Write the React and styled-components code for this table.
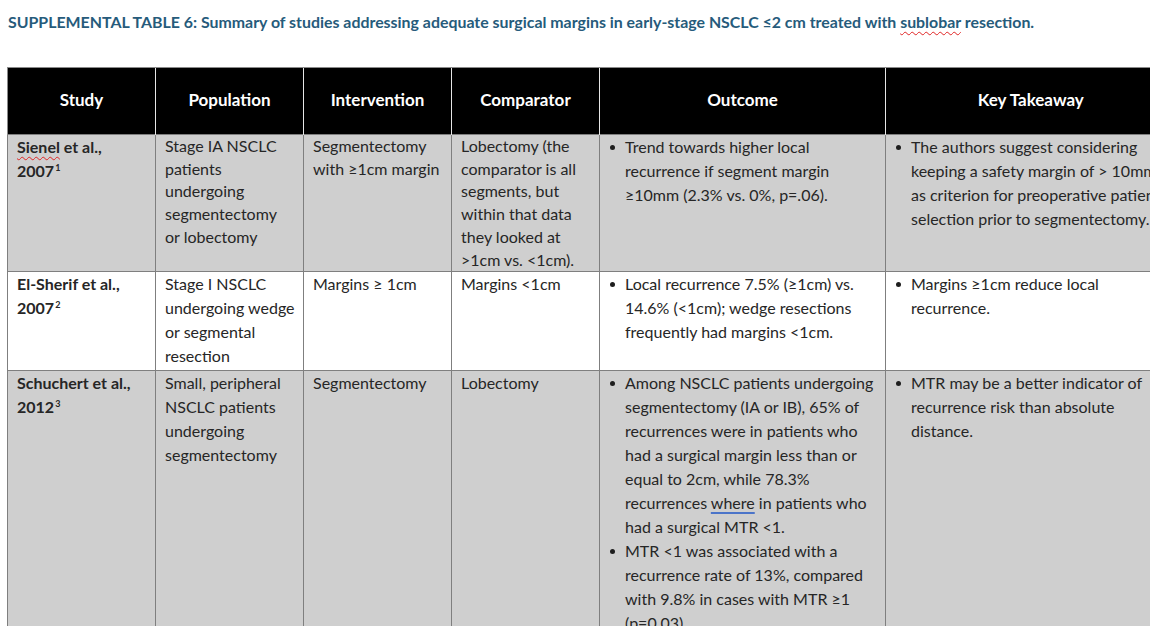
import styled, { createGlobalStyle } from "styled-components";

const GlobalStyle = createGlobalStyle`
  html, body {
    margin: 0;
    padding: 0;
    background: #fff;
    overflow: hidden;
  }
  body {
    font-family: Lato, "Open Sans", sans-serif;
    color: #262626;
  }
`;

const Page = styled.div`
  padding: 12px 0 0 7px;
  width: 1200px;
`;

const Title = styled.h1`
  margin: 0 0 35px 1px;
  font-size: 15.9px;
  font-weight: 700;
  line-height: 20px;
  color: #265b7b;
  white-space: nowrap;
`;

const Squiggle = styled.span`
  text-decoration: underline wavy #e02424;
  text-decoration-thickness: 1px;
  text-underline-offset: 3px;
`;

const Grammar = styled.span`
  text-decoration: underline solid #4b74c9;
  text-decoration-thickness: 2px;
  text-underline-offset: 3px;
`;

const Sup = styled.sup`
  font-size: 9px;
  line-height: 0;
  vertical-align: 6px;
  margin-left: 1px;
`;

const Table = styled.table`
  border-collapse: collapse;
  table-layout: fixed;
  width: 1168px;
`;

const HeadCell = styled.th`
  background: #000;
  color: #fff;
  font-weight: 700;
  font-size: 17px;
  height: 62px;
  padding: 0 0 4px;
  text-align: center;
  vertical-align: middle;
  border-top: 1px solid #8a8a8a;
  border-left: 1px solid #e6e6e6;

  &:first-child {
    border-left-color: #8a8a8a;
  }
`;

const Row = styled.tr`
  background: ${(p) => (p.$shaded ? "#cfcfcf" : "#fff")};
  height: ${(p) => p.$h}px;
`;

const Cell = styled.td`
  border: 1px solid #7f7f7f;
  vertical-align: top;
  padding: 0 6px 0 9px;
  font-size: 16px;
  font-weight: ${(p) => (p.$bold ? 700 : 400)};
  line-height: ${(p) => p.$lh}px;
`;

const Line = styled.span`
  display: block;
  white-space: nowrap;
`;

const BulletItem = styled.div`
  display: flex;
  line-height: 24px;
`;

const Dot = styled.span`
  flex: none;
  width: 16px;
  height: 24px;
  display: flex;
  align-items: center;

  &::before {
    content: "";
    width: 5px;
    height: 5px;
    margin-left: 1px;
    border-radius: 50%;
    background: #1e1e1e;
  }
`;

const columns = [
  { label: "Study", width: 148 },
  { label: "Population", width: 148 },
  { label: "Intervention", width: 148 },
  { label: "Comparator", width: 148 },
  { label: "Outcome", width: 286 },
  { label: "Key Takeaway", width: 290 },
];

const rows = [
  {
    shaded: true,
    h: 137,
    lh: 22.7,
    study: [<><Squiggle>Sienel</Squiggle> et al.,</>, <>2007<Sup>1</Sup></>],
    population: ["Stage IA NSCLC", "patients", "undergoing", "segmentectomy", "or lobectomy"],
    intervention: ["Segmentectomy", "with ≥1cm margin"],
    comparator: [
      "Lobectomy (the",
      "comparator is all",
      "segments, but",
      "within that data",
      "they looked at",
      ">1cm vs. <1cm).",
    ],
    outcome: [["Trend towards higher local", "recurrence if segment margin", "≥10mm (2.3% vs. 0%, p=.06)."]],
    takeaway: [
      [
        "The authors suggest considering",
        "keeping a safety margin of > 10mm",
        "as criterion for preoperative patient",
        "selection prior to segmentectomy.",
      ],
    ],
  },
  {
    shaded: false,
    h: 99,
    lh: 24,
    study: ["El-Sherif et al.,", <>2007<Sup>2</Sup></>],
    population: ["Stage I NSCLC", "undergoing wedge", "or segmental", "resection"],
    intervention: ["Margins ≥ 1cm"],
    comparator: ["Margins <1cm"],
    outcome: [["Local recurrence 7.5% (≥1cm) vs.", "14.6% (<1cm); wedge resections", "frequently had margins <1cm."]],
    takeaway: [["Margins ≥1cm reduce local", "recurrence."]],
  },
  {
    shaded: true,
    h: 300,
    lh: 24,
    study: ["Schuchert et al.,", <>2012<Sup>3</Sup></>],
    population: ["Small, peripheral", "NSCLC patients", "undergoing", "segmentectomy"],
    intervention: ["Segmentectomy"],
    comparator: ["Lobectomy"],
    outcome: [
      [
        "Among NSCLC patients undergoing",
        "segmentectomy (IA or IB), 65% of",
        "recurrences were in patients who",
        "had a surgical margin less than or",
        "equal to 2cm, while 78.3%",
        <>recurrences <Grammar>where</Grammar> in patients who</>,
        "had a surgical MTR <1.",
      ],
      ["MTR <1 was associated with a", "recurrence rate of 13%, compared", "with 9.8% in cases with MTR ≥1", "(p=0.03)."],
    ],
    takeaway: [["MTR may be a better indicator of", "recurrence risk than absolute", "distance."]],
  },
];

function Lines({ lines }) {
  return lines.map((line, i) => <Line key={i}>{line}</Line>);
}

function Bullets({ items }) {
  return items.map((lines, i) => (
    <BulletItem key={i}>
      <Dot />
      <div>
        <Lines lines={lines} />
      </div>
    </BulletItem>
  ));
}

export default function App() {
  return (
    <>
      <GlobalStyle />
      <Page>
        <Title>
          SUPPLEMENTAL TABLE 6: Summary of studies addressing adequate surgical margins in early-stage NSCLC ≤2 cm
          treated with <Squiggle>sublobar</Squiggle> resection.
        </Title>
        <Table>
          <colgroup>
            {columns.map((c) => (
              <col key={c.label} style={{ width: c.width }} />
            ))}
          </colgroup>
          <thead>
            <tr>
              {columns.map((c) => (
                <HeadCell key={c.label}>{c.label}</HeadCell>
              ))}
            </tr>
          </thead>
          <tbody>
            {rows.map((r, i) => (
              <Row key={i} $shaded={r.shaded} $h={r.h}>
                <Cell $bold $lh={24}>
                  <Lines lines={r.study} />
                </Cell>
                <Cell $lh={r.lh}>
                  <Lines lines={r.population} />
                </Cell>
                <Cell $lh={r.lh}>
                  <Lines lines={r.intervention} />
                </Cell>
                <Cell $lh={r.lh}>
                  <Lines lines={r.comparator} />
                </Cell>
                <Cell $lh={24}>
                  <Bullets items={r.outcome} />
                </Cell>
                <Cell $lh={24}>
                  <Bullets items={r.takeaway} />
                </Cell>
              </Row>
            ))}
          </tbody>
        </Table>
      </Page>
    </>
  );
}
